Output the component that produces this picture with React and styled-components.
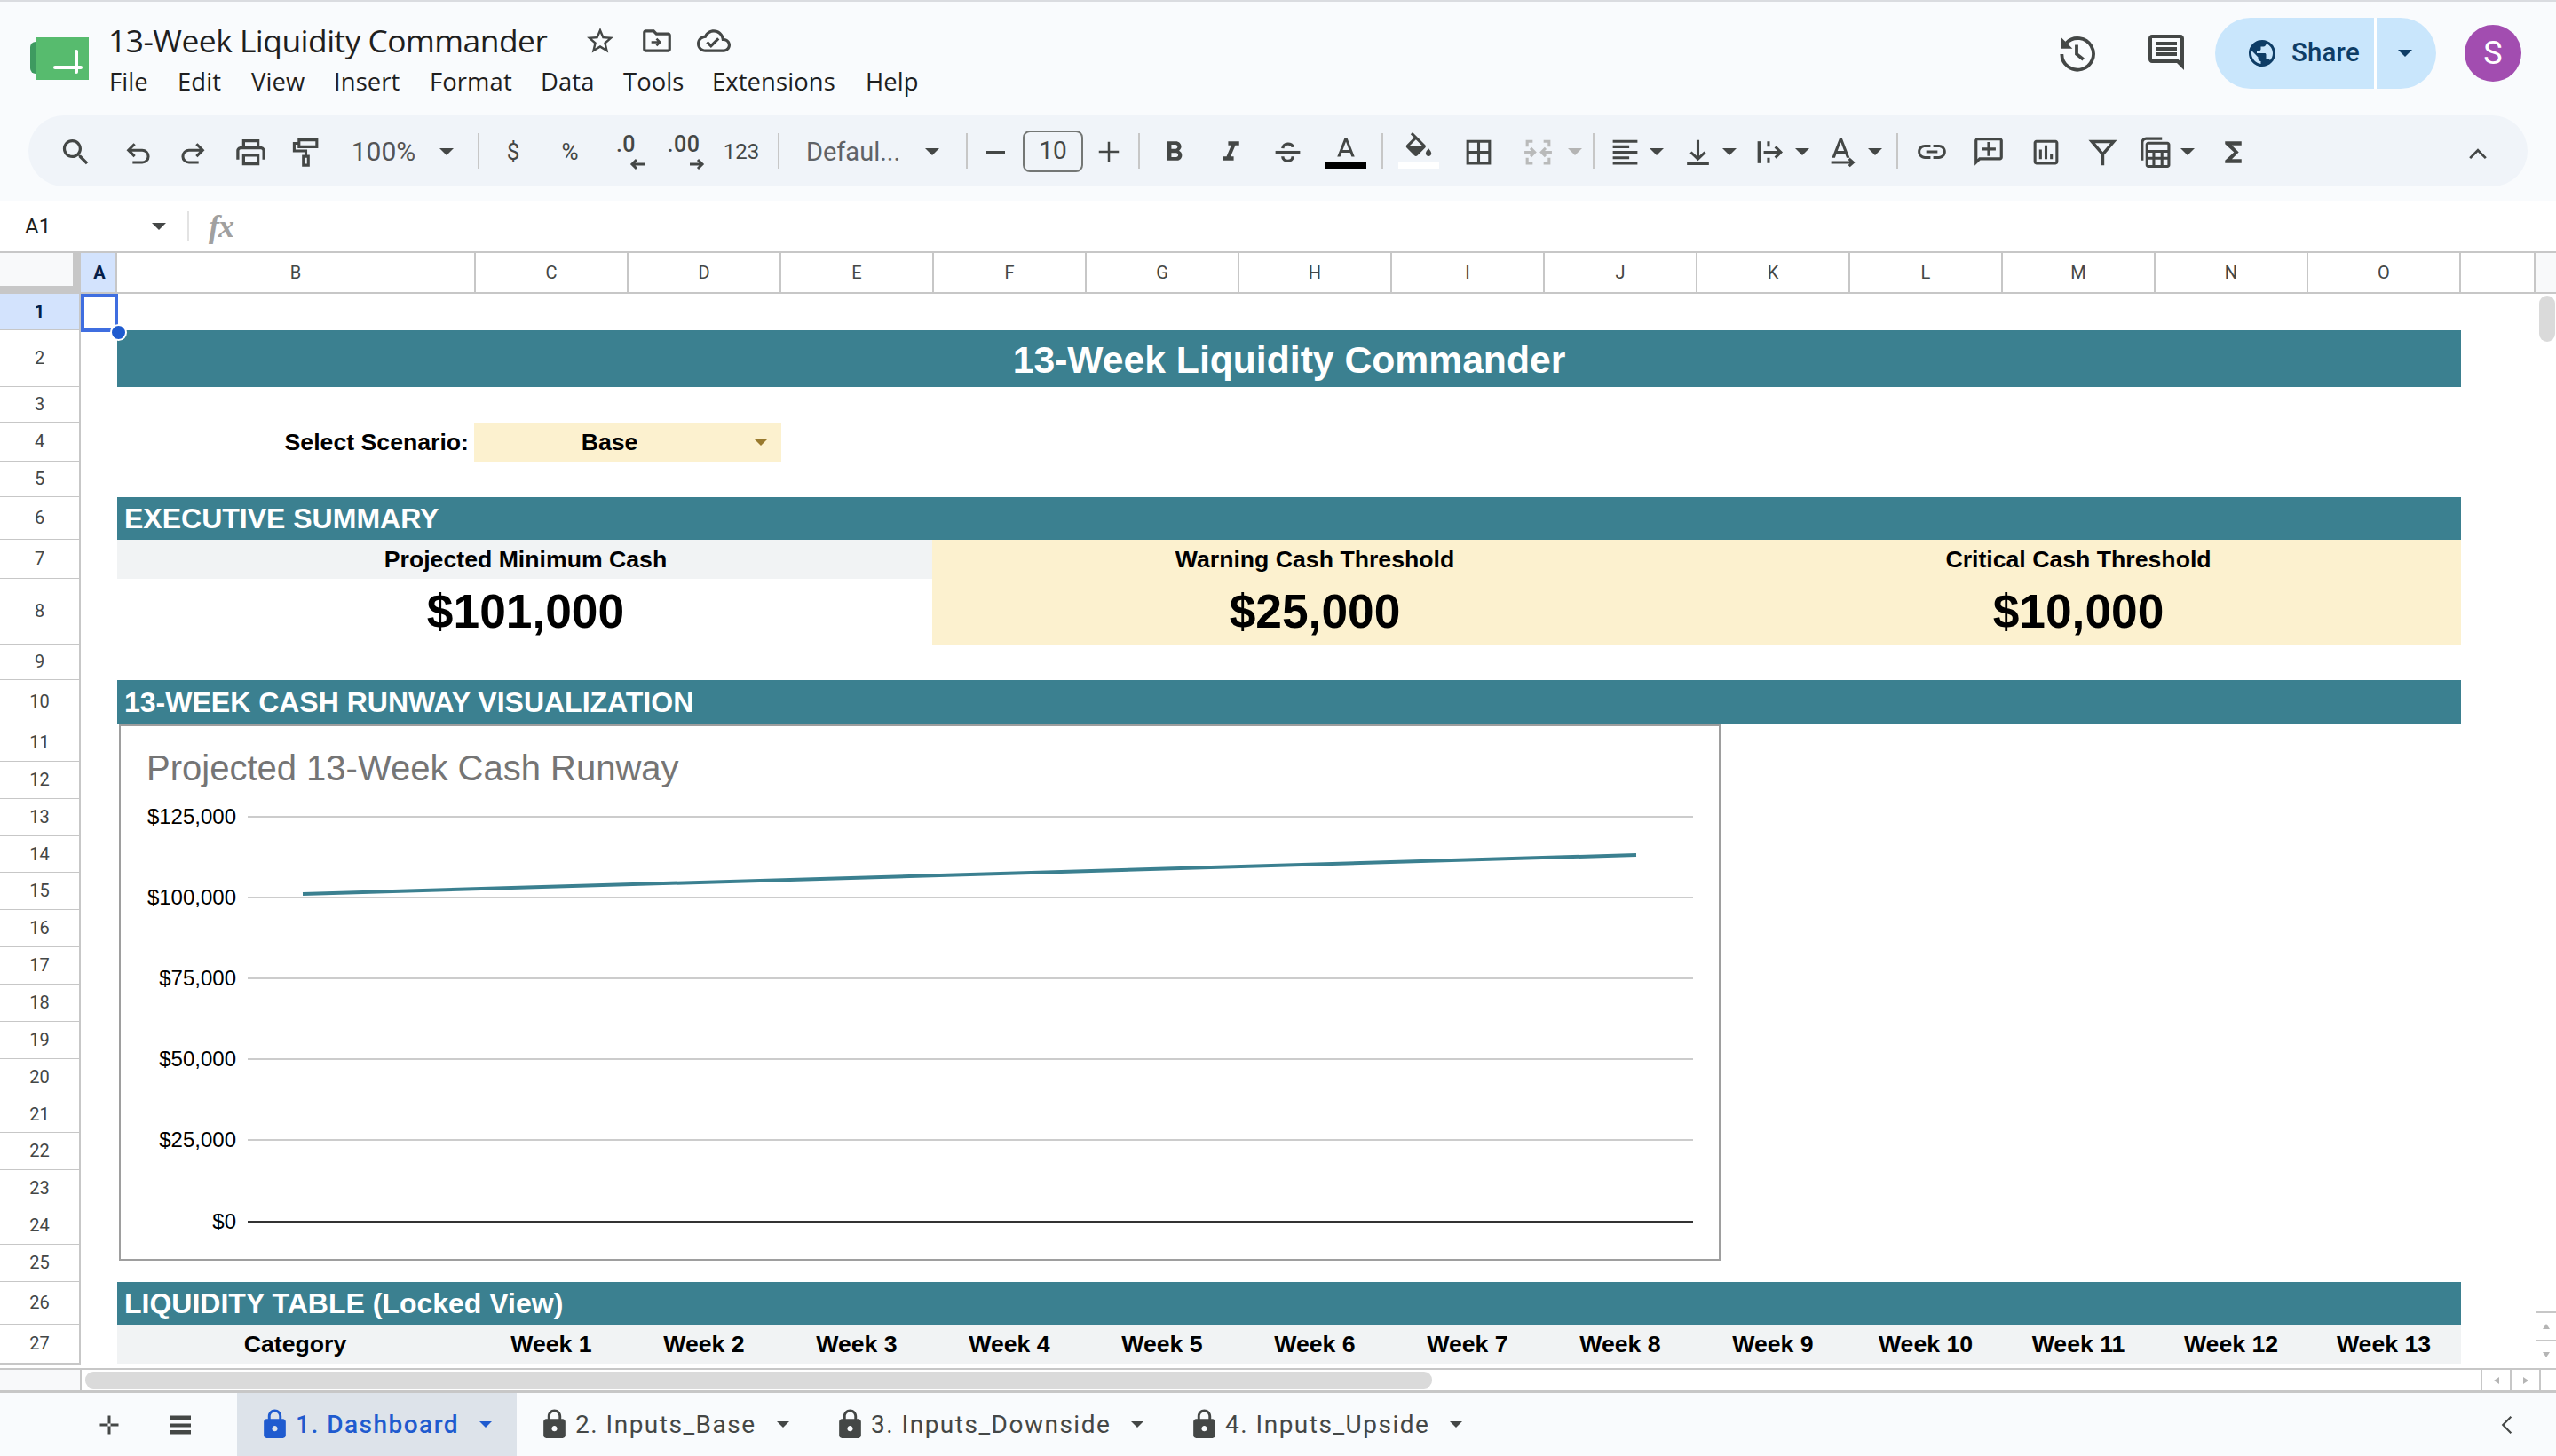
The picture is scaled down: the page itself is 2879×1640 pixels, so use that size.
import React from 'react';
import styled, { createGlobalStyle } from 'styled-components';

const UI = '"Open Sans", "Noto Sans", sans-serif';
const RB = 'Roboto, "Noto Sans", sans-serif';
const AR = '"Liberation Sans", Arial, sans-serif';
const TEAL = '#3b8090';
const YEL = '#fcf1cf';
const GREY = '#f1f3f4';
const LINE = '#c7c7c7';
const ICON = '#444746';

const Global = createGlobalStyle`
  html, body { margin: 0; padding: 0; width: 2879px; height: 1640px; overflow: hidden; background: #fff; }
  * { box-sizing: border-box; }
`;

const Page = styled.div`
  width: 2879px; height: 1640px; display: flex; flex-direction: column; background: #fff; overflow: hidden;
`;

/* ---- header ---- */
const Header = styled.header`
  height: 226px; flex: none; background: #f9fbfd; border-top: 2px solid #dadce0;
  display: flex; flex-direction: column;
`;
const TopBar = styled.div`
  height: 128px; flex: none; display: flex; align-items: flex-start; position: relative;
`;
const LogoBox = styled.div`
  flex: none; width: 122px; padding: 40px 0 0 34px;
`;
const TitleBlock = styled.div`
  flex: 1; display: flex; flex-direction: column; padding-top: 18px;
`;
const TitleRow = styled.div`
  display: flex; align-items: center; height: 50px;
`;
const DocTitle = styled.div`
  font: 400 35.4px/50px ${UI}; color: #1f1f1f; width: 522px; white-space: nowrap; letter-spacing: -0.52px;
`;
const TitleIcon = styled.span`
  flex: none; width: 64px; display: flex; justify-content: center; color: ${ICON}; padding-top: 2px;
`;
const Menu = styled.nav`
  display: flex; height: 40px; align-items: center; margin-top: 2px; padding-left: 1px;
`;
const MenuItem = styled.span`
  flex: none; width: ${p => p.$w}px; font: 400 27.4px/40px ${UI}; color: #1f1f1f; letter-spacing: 0.1px;
`;
const Actions = styled.div`
  flex: none; display: flex; align-items: center; height: 80px; margin-top: 18px; padding-right: 39px;
`;
const ActionIcon = styled.span`
  flex: none; width: 99px; display: flex; justify-content: center; color: ${ICON};
  padding: 0 ${p => p.$pr}px 3px 0;
`;
const ShareBtn = styled.div`
  flex: none; width: 249px; height: 80px; margin-left: 5px; border-radius: 40px; background: #c9e6fc; display: flex; overflow: hidden; color: #0e3d66;
`;
const ShareMain = styled.div`
  width: 182px; display: flex; align-items: center; padding-left: 35px; gap: 15px; border-right: 3px solid #fff;
  font: 500 29.4px/1 ${RB}; letter-spacing: 0.2px;
`;
const ShareCaret = styled.div`
  flex: 1; display: flex; align-items: center; justify-content: center; padding-right: 3px;
`;
const Avatar = styled.div`
  flex: none; width: 64px; height: 64px; margin-left: 32px; border-radius: 50%; background: #a24db0; color: #fff;
  display: flex; align-items: center; justify-content: center; font: 400 36px/1 ${RB};
`;

/* ---- toolbar ---- */
const Toolbar = styled.div`
  height: 80px; margin: 0 32px; padding-top: 2px; border-radius: 40px; background: #f0f4f9; display: flex; align-items: center;
`;
const Slot = styled.div`
  flex: none; width: ${p => p.$w}px; margin-left: ${p => p.$ml}px; height: 60px;
  display: flex; flex-direction: column; align-items: center; justify-content: center; color: ${ICON}; position: relative;
`;
const Sep = styled.div`
  width: 2px; height: 40px; background: #c7c7c7; margin-top: -2px;
`;
const Caret = styled.span`
  display: block; width: 0; height: 0; flex: none;
  border-left: ${p => p.$s || 8}px solid transparent; border-right: ${p => p.$s || 8}px solid transparent;
  border-top: ${p => p.$s || 8}px solid ${p => p.$c || 'currentColor'};
`;
const ToolText = styled.span`
  font: ${p => p.$wt || 400} ${p => p.$s || 26}px/1 ${p => p.$f || RB}; color: ${p => p.$c || ICON}; white-space: nowrap;
`;
const DecimalText = styled.span`
  font: 500 25px/24px ${RB}; color: ${ICON}; letter-spacing: 0.5px; margin-bottom: 3px; white-space: nowrap;
`;
const SizeBox = styled.div`
  width: 68px; height: 47px; border: 2px solid #747775; border-radius: 8px; display: flex; align-items: center; justify-content: center;
  font: 400 28px/1 ${RB}; color: ${ICON}; margin-top: -2px;
`;
const ColorBar = styled.span`
  position: absolute; left: 0; right: 0; bottom: 11px; height: 8px; background: ${p => p.$c};
`;
const ColorIcon = styled.span`
  margin-bottom: ${p => p.$m}px;
`;
const DecArrowWrap = styled.span`
  align-self: flex-end;
`;
const MergeWrap = styled.span`
  color: #b4b4b4;
`;

/* ---- formula bar ---- */
const FormulaBar = styled.div`
  height: 57px; flex: none; display: flex; align-items: center; background: #fff;
`;
const CellRef = styled.div`
  width: 213px; display: flex; align-items: center; justify-content: space-between; padding: 0 24px 0 28px;
  font: 400 24px/1 ${RB}; color: #1f1f1f; border-right: 2px solid #e3e3e3; height: 34px;
`;
const Fx = styled.div`
  margin-left: 22px; font: italic 700 36px/1 "Liberation Serif", serif; color: #a0a0a0; letter-spacing: -1px;
`;

/* ---- sheet ---- */
const SheetWrap = styled.div`
  height: 1258px; flex: none; display: flex; overflow: hidden;
`;
const Grid = styled.div`
  width: 2856px; height: 1258px; flex: none; display: grid; overflow: hidden;
  grid-template-columns: 91px 41px 404px repeat(13, 172px) 1fr;
  grid-template-rows: 48px 41px 64px 40px 44px 40px 48px 44px 74px 40px 50px repeat(15, 41.87px) 48px 44px 1fr;
`;
const Corner = styled.div`
  grid-row: 1; grid-column: 1; background: #f8f9fa; border-top: 2px solid ${LINE};
  border-right: 9px solid ${LINE}; border-bottom: 9px solid ${LINE};
`;
const ColHead = styled.div`
  grid-row: 1; grid-column: ${p => p.$c}; display: flex; align-items: center; justify-content: center;
  border-top: 2px solid ${LINE}; border-bottom: 2px solid ${LINE}; border-right: 2px solid ${LINE};
  font: ${p => (p.$on ? 700 : 400)} 20px/1 ${RB}; color: ${p => (p.$on ? '#041e49' : ICON)};
  background: ${p => (p.$on ? '#d3e3fd' : '#fff')}; padding-left: ${p => (p.$on ? 3 : 0)}px;
`;
const RowHead = styled.div`
  grid-row: ${p => p.$r}; grid-column: 1; display: flex; align-items: center; justify-content: center;
  box-shadow: inset 0 -1px 0 ${LINE}, 0 1px 0 ${LINE};
  border-right: 2px solid ${LINE}; padding-bottom: 2px;
  font: ${p => (p.$on ? 700 : 400)} 20px/1 ${RB}; color: ${p => (p.$on ? '#041e49' : ICON)};
  background: ${p => (p.$on ? '#d3e3fd' : '#fff')}; position: relative; z-index: 1;
`;
const Selected = styled.div`
  grid-row: 2; grid-column: 2; border: 4px solid #3f6ee0; margin: 0 0 -2px 0; width: 42px; position: relative; z-index: 3;
`;
const Handle = styled.span`
  position: absolute; right: -14px; bottom: -14px; width: 19px; height: 19px; border-radius: 50%;
  background: #1f5bcf; border: 2px solid #fff;
`;
const Cell = styled.div`
  grid-row: ${p => p.$r}; grid-column: ${p => p.$c}; display: flex; align-items: center; min-width: 0;
  justify-content: ${p => p.$j || 'center'}; background: ${p => p.$bg || 'transparent'};
  font: 700 ${p => p.$s || 26.67}px/1 ${AR}; color: ${p => p.$fg || '#000'}; white-space: nowrap;
  padding: ${p => p.$pad || '0'}; margin-left: ${p => p.$ml || 0}px; position: relative;
`;
const CellCaret = styled.span`
  position: absolute; right: 15px; top: 18px;
`;
const ChartFrame = styled.div`
  grid-row: 12 / 27; grid-column: 3 / 13; justify-self: start; align-self: start; margin-left: 2px;
  width: 1804px; height: 604px; border: 2px solid #9e9e9e; background: #fff; position: relative; z-index: 2;
`;
const ChartSvg = styled.svg`
  display: block; width: 100%; height: 100%;
`;
const VScroll = styled.div`
  flex: 1; display: flex; flex-direction: column; background: #fff;
`;
const VHead = styled.div`
  height: 48px; flex: none; background: #f8f9fa; border-top: 2px solid ${LINE}; border-bottom: 2px solid ${LINE};
`;
const VTrack = styled.div`
  flex: 1; padding: 2px 1px 0 4px; min-height: 0;
`;
const VThumb = styled.div`
  height: 52px; border-radius: 9px; background: #dadada;
`;
const VArrow = styled.div`
  height: 32px; flex: none; border-top: 2px solid ${LINE}; display: flex; align-items: center; justify-content: center;
`;
const MiniUp = styled.span`
  width: 0; height: 0; border-left: 4px solid transparent; border-right: 4px solid transparent; border-bottom: 6px solid #b5b5b5;
`;
const MiniDown = styled(MiniUp)`
  border-bottom: 0; border-top: 6px solid #b5b5b5;
`;
const MiniLeft = styled.span`
  width: 0; height: 0; border-top: 4px solid transparent; border-bottom: 4px solid transparent; border-right: 6px solid #b5b5b5;
`;
const MiniRight = styled(MiniLeft)`
  border-right: 0; border-left: 6px solid #b5b5b5;
`;

/* ---- horizontal scroll ---- */
const HScroll = styled.div`
  height: 25px; flex: none; display: flex; align-items: stretch; background: #fff; border-top: 2px solid ${LINE};
`;
const HCorner = styled.div`
  width: 92px; flex: none; background: #f8f9fa; border-right: 2px solid ${LINE};
`;
const HTrack = styled.div`
  width: 2702px; flex: none; padding: 2px 0 2px 4px;
`;
const HThumb = styled.div`
  width: 1517px; height: 100%; border-radius: 9px; background: #dadada;
`;
const HArrow = styled.div`
  flex: none; width: ${p => p.$w || 33}px; border-left: 2px solid ${LINE}; display: flex; align-items: center; justify-content: center;
`;

/* ---- tabs ---- */
const TabBar = styled.div`
  flex: 1; display: flex; align-items: stretch; background: #f9fbfd; border-top: 3px solid ${LINE}; padding-left: 83px;
`;
const TabTool = styled.div`
  flex: none; width: 80px; display: flex; align-items: center; justify-content: center; color: ${ICON};
`;
const TabList = styled.div`
  flex: none; display: flex; margin-left: 24px;
`;
const Tab = styled.div`
  flex: none; width: ${p => p.$w}px; display: flex; align-items: center; padding-left: 24px; gap: 5px;
  background: ${p => (p.$on ? '#dde3ea' : 'transparent')}; color: ${p => (p.$on ? '#1f5bcf' : ICON)};
  font: ${p => (p.$on ? 500 : 400)} 28px/1 ${RB}; letter-spacing: 1.5px; white-space: nowrap;
`;
const TabCaret = styled.span`
  margin-left: 18px; display: block;
`;
const TabSpacer = styled.div`
  flex: 1;
`;
const Collapse = styled.div`
  flex: none; width: 110px; display: flex; align-items: center; justify-content: center; color: ${ICON};
`;

const Ic = ({ s = 37, vb = '0 0 24 24', d, children, fill = 'currentColor' }) => (
  <svg width={s} height={s} viewBox={vb} fill={fill} style={{ display: 'block', flex: 'none' }}>
    {d ? <path d={d} fillRule="evenodd" /> : null}
    {children}
  </svg>
);
const St = ({ d, w = 2 }) => <path d={d} fill="none" stroke="currentColor" strokeWidth={w} />;

const P = {
  search: 'M15.5 14h-.79l-.28-.27C15.41 12.59 16 11.11 16 9.5 16 5.91 13.09 3 9.5 3S3 5.91 3 9.5 5.91 16 9.5 16c1.61 0 3.09-.59 4.23-1.57l.27.28v.79l5 4.99L20.49 19l-4.99-5zm-6 0C7.01 14 5 11.99 5 9.5S7.01 5 9.5 5 14 7.01 14 9.5 11.99 14 9.5 14z',
  print: 'M19 8h-1V3H6v5H5c-1.66 0-3 1.34-3 3v6h4v4h12v-4h4v-6c0-1.66-1.34-3-3-3zM8 5h8v3H8V5zm8 14H8v-4h8v4zm2-2v-4H6v4H4v-6c0-.55.45-1 1-1h14c.55 0 1 .45 1 1v6h-2z',
  bold: 'M15.6 10.79c.97-.67 1.65-1.77 1.65-2.79 0-2.26-1.75-4-4-4H7v14h7.04c2.09 0 3.71-1.7 3.71-3.79 0-1.52-.86-2.82-2.15-3.42zM10 6.5h3c.83 0 1.5.67 1.5 1.5s-.67 1.5-1.5 1.5h-3v-3zm3.5 9H10v-3h3.5c.83 0 1.5.67 1.5 1.5s-.67 1.5-1.5 1.5z',
  italic: 'M10 4v3h2.21l-3.42 8H6v3h8v-3h-2.21l3.42-8H18V4z',
  letterA: 'M11 3L5.5 17h2.25l1.12-3h6.25l1.12 3h2.25L13 3h-2zm-1.38 9L12 5.67 14.38 12H9.62z',
  fill: 'M16.56 8.94L7.62 0 6.21 1.41l2.38 2.38-5.15 5.15c-.59.59-.59 1.54 0 2.12l5.5 5.5c.29.29.68.44 1.06.44s.77-.15 1.06-.44l5.5-5.5c.59-.58.59-1.53 0-2.12zM5.21 10L10 5.21 14.79 10H5.21zM19 11.5s-2 2.17-2 3.5c0 1.1.9 2 2 2s2-.9 2-2c0-1.33-2-3.5-2-3.5z',
  borders: 'M3 3v18h18V3H3zm8 16H5v-6h6v6zm0-8H5V5h6v6zm8 8h-6v-6h6v6zm0-8h-6V5h6v6z',
  alignL: 'M15 15H3v2h12v-2zm0-8H3v2h12V7zM3 13h18v-2H3v2zm0 8h18v-2H3v2zM3 3v2h18V3H3z',
  link: 'M3.9 12c0-1.71 1.39-3.1 3.1-3.1h4V7H7c-2.76 0-5 2.24-5 5s2.24 5 5 5h4v-1.9H7c-1.71 0-3.1-1.39-3.1-3.1zM8 13h8v-2H8v2zm9-6h-4v1.9h4c1.71 0 3.1 1.39 3.1 3.1s-1.39 3.1-3.1 3.1h-4V17h4c2.76 0 5-2.24 5-5s-2.24-5-5-5z',
  commentAdd: 'M20 2H4c-1.1 0-2 .9-2 2v18l4-4h14c1.1 0 2-.9 2-2V4c0-1.1-.9-2-2-2zm0 14H5.17L4 17.17V4h16v12zM11 5h2v4h4v2h-4v4h-2v-4H7V9h4z',
  chart: 'M19 3H5c-1.1 0-2 .9-2 2v14c0 1.1.9 2 2 2h14c1.1 0 2-.9 2-2V5c0-1.1-.9-2-2-2zm0 16H5V5h14v14zM7 10h2v7H7zm4-3h2v10h-2zm4 6h2v4h-2z',
  sigma: 'M18 4H6v2l6.5 6L6 18v2h12v-3h-7l5-5-5-5h7z',
  comments: 'M21.99 4c0-1.1-.89-2-1.99-2H4c-1.1 0-2 .9-2 2v12c0 1.1.9 2 2 2h14l4 4-.01-18zM20 4v13.17L18.83 16H4V4h16zM6 12h12v2H6zm0-3h12v2H6zm0-3h12v2H6z',
  globe: 'M12 2C6.48 2 2 6.48 2 12s4.48 10 10 10 10-4.48 10-10S17.52 2 12 2zM4 12c0-.61.08-1.21.21-1.78L8.99 15v1c0 1.1.9 2 2 2v1.93C7.06 19.43 4 16.07 4 12zm13.89 5.4c-.26-.81-1-1.4-1.9-1.4h-1v-3c0-.55-.45-1-1-1h-6v-2h2c.55 0 1-.45 1-1V7h2c1.1 0 2-.9 2-2v-.41C17.92 5.77 20 8.65 20 12c0 2.08-.81 3.98-2.11 5.4z',
  star: 'M22 9.24l-7.19-.62L12 2 9.19 8.63 2 9.24l5.46 4.73L5.82 21 12 17.27 18.18 21l-1.63-7.03L22 9.24zM12 15.4l-3.76 2.27 1-4.28-3.32-2.88 4.38-.38L12 6.1l1.71 4.04 4.38.38-3.32 2.88 1 4.28L12 15.4z',
  folder: 'M20 6h-8l-2-2H4c-1.1 0-2 .9-2 2v12c0 1.1.9 2 2 2h16c1.1 0 2-.9 2-2V8c0-1.1-.9-2-2-2zm0 12H4V6h5.17l2 2H20v10zM12.2 10l-1.1 1.1 1.1 1.1H8v1.6h4.2l-1.1 1.1 1.1 1.1 3-3z',
  cloud: 'M19.35 10.04C18.67 6.59 15.64 4 12 4 9.11 4 6.6 5.64 5.35 8.04 2.34 8.36 0 10.91 0 14c0 3.31 2.69 6 6 6h13c2.76 0 5-2.24 5-5 0-2.64-2.05-4.78-4.65-4.96zM19 18H6c-2.21 0-4-1.79-4-4 0-2.05 1.53-3.76 3.56-3.97l1.07-.11.5-.95C8.08 7.14 9.94 6 12 6c2.62 0 4.88 1.86 5.39 4.43l.3 1.5 1.53.11c1.56.1 2.78 1.41 2.78 2.96 0 1.65-1.35 3-3 3zm-9-3.82l-2.09-2.09L6.5 13.5 10 17l6.01-6.01-1.41-1.41z',
  lock: 'M18 8h-1V6c0-2.76-2.24-5-5-5S7 3.24 7 6v2H6c-1.1 0-2 .9-2 2v10c0 1.1.9 2 2 2h12c1.1 0 2-.9 2-2V10c0-1.1-.9-2-2-2zm-6 9c-1.1 0-2-.9-2-2s.9-2 2-2 2 .9 2 2-.9 2-2 2zm3.1-9H8.9V6c0-1.71 1.39-3.1 3.1-3.1 1.71 0 3.1 1.39 3.1 3.1v2z',
};

const Undo = () => <Ic><St d="M9.5 6 5 10.5l4.5 4.5M5 10.5h10a4.5 4.5 0 0 1 0 9H8" /></Ic>;
const Redo = () => <Ic><St d="M14.5 6 19 10.5 14.5 15M19 10.5H9a4.5 4.5 0 0 0 0 9h7" /></Ic>;
const Paint = () => <Ic><St d="M7 3h13v5H7zM7 5.5H3.5V11H12v4" /><St d="M10.2 15h3.6v6.5h-3.6z" /></Ic>;
const Strike = () => <Ic><St d="M3 12h18" /><St d="M8.3 9.2c.2-4.2 7.2-4.2 7.4-.9M8.3 15c0 4.5 7.4 4.5 7.4 0" w={2.2} /></Ic>;
const Merge = () => (
  <Ic><g opacity=".9"><St d="M8 4H4v4M4 16v4h4M16 4h4v4M20 16v4h-4" /><St d="M2 12h7M6.5 9l3 3-3 3M22 12h-7M17.5 9l-3 3 3 3" /></g></Ic>
);
const VAlign = () => <Ic><St d="M12 3v14M6.8 12 12 17l5.2-5" /><path d="M4 19h16v2.4H4z" /></Ic>;
const Wrap = () => <Ic><path d="M3 4h2.4v16H3z" /><St d="M11 4v4M11 16v4M7.5 12H20M16 8l4 4-4 4" /></Ic>;
const RotateA = () => <Ic><path d={P.letterA} transform="translate(-2 -1)" /><St d="M3 19.5h15M16 16.8l3 2.7-3 2.7" /></Ic>;
const Funnel = () => <Ic><St d="M4 4.2h16L12 13.5zM12 13v8.5" w={2.2} /></Ic>;
const FuncTable = () => (
  <Ic>
    <St d="M2.5 18V5a3 3 0 0 1 3-3H17" />
    <path d="M7 5h14c1 0 2 1 2 2v15c0 1-1 2-2 2H7c-1 0-2-1-2-2V7c0-1 1-2 2-2zm0 2v4h14V7zm0 6v3h3v-3zm5 0v3h4v-3zm6 0v3h3v-3zM7 18v4h3v-4zm5 0v4h4v-4zm6 0v4h3v-4z" fillRule="evenodd" transform="translate(0 -.6)" />
  </Ic>
);
const DecArrow = ({ right }) => (
  <svg width="18" height="14" viewBox="0 0 18 14" style={{ display: 'block' }}>
    <path d={right ? 'M1 7h14M10 2l5 5-5 5' : 'M17 7H3M8 2 3 7l5 5'} fill="none" stroke={ICON} strokeWidth="3" />
  </svg>
);

const tools = [
  { c: 85, n: <Ic d={P.search} s={39} /> },
  { c: 155, n: <Undo /> },
  { c: 217, n: <Redo /> },
  { c: 282, n: <Ic d={P.print} s={39} /> },
  { c: 344, n: <Paint /> },
  { c: 432, w: 80, n: <ToolText $s={30} $c="#555">100%</ToolText> },
  { c: 503, w: 20, n: <Caret /> },
  { c: 539, w: 4, n: <Sep /> },
  { c: 578, n: <ToolText $s={26}>$</ToolText> },
  { c: 642, n: <ToolText $s={26}>%</ToolText> },
  { c: 705, w: 44, n: <><DecimalText>.0</DecimalText><DecArrowWrap><DecArrow /></DecArrowWrap></> },
  { c: 770, w: 48, n: <><DecimalText>.00</DecimalText><DecArrowWrap><DecArrow right /></DecArrowWrap></> },
  { c: 835, n: <ToolText $s={24}>123</ToolText> },
  { c: 877, w: 4, n: <Sep /> },
  { c: 961, w: 110, n: <ToolText $s={29} $c="#5f6368">Defaul...</ToolText> },
  { c: 1050, w: 20, n: <Caret /> },
  { c: 1089, w: 4, n: <Sep /> },
  { c: 1121, n: <svg width="21" height="3"><rect width="21" height="3" fill={ICON} /></svg> },
  { c: 1186, w: 68, n: <SizeBox>10</SizeBox> },
  { c: 1249, n: <Ic s={30}><path d="M11 3h2v18h-2zM3 11h18v2H3z" /></Ic> },
  { c: 1283, w: 4, n: <Sep /> },
  { c: 1322, n: <Ic d={P.bold} /> },
  { c: 1386, n: <Ic d={P.italic} /> },
  { c: 1450, n: <Strike /> },
  { c: 1516, w: 46, n: <><ColorIcon $m={4}><Ic d={P.letterA} s={36} /></ColorIcon><ColorBar $c="#000" /></> },
  { c: 1557, w: 4, n: <Sep /> },
  { c: 1598, w: 46, n: <><ColorIcon $m={6}><Ic d={P.fill} s={38} /></ColorIcon><ColorBar $c="#fff" /></> },
  { c: 1665, n: <Ic d={P.borders} /> },
  { c: 1732, n: <MergeWrap><Merge /></MergeWrap> },
  { c: 1774, w: 20, n: <Caret $c="#b4b4b4" /> },
  { c: 1795, w: 4, n: <Sep /> },
  { c: 1830, n: <Ic d={P.alignL} /> },
  { c: 1866, w: 20, n: <Caret /> },
  { c: 1912, n: <VAlign /> },
  { c: 1948, w: 20, n: <Caret /> },
  { c: 1993, n: <Wrap /> },
  { c: 2030, w: 20, n: <Caret /> },
  { c: 2076, n: <RotateA /> },
  { c: 2112, w: 20, n: <Caret /> },
  { c: 2137, w: 4, n: <Sep /> },
  { c: 2176, n: <Ic d={P.link} s={38} /> },
  { c: 2240, n: <Ic d={P.commentAdd} s={38} /> },
  { c: 2304, n: <Ic d={P.chart} /> },
  { c: 2368, n: <Funnel /> },
  { c: 2427, n: <FuncTable /> },
  { c: 2464, w: 20, n: <Caret /> },
  { c: 2515, n: <Ic d={P.sigma} /> },
  { c: 2791, n: <Ic s={42} d="M6.4 15.6 12 9.9l5.6 5.7-1.1 1L12 12.1l-4.5 4.5z" /> },
];

const menu = [['File', 77], ['Edit', 83], ['View', 93], ['Insert', 108], ['Format', 125], ['Data', 93], ['Tools', 100], ['Extensions', 173], ['Help', 60]];
const columns = ['A', 'B', 'C', 'D', 'E', 'F', 'G', 'H', 'I', 'J', 'K', 'L', 'M', 'N', 'O'];
const yTicks = [['$125,000', 104], ['$100,000', 195], ['$75,000', 286], ['$50,000', 377], ['$25,000', 468]];
const tabs = ['1. Dashboard', '2. Inputs_Base', '3. Inputs_Downside', '4. Inputs_Upside'];
const tabWidths = [315, 333, 399, 400];

function renderTools() {
  let x = 32;
  return tools.map((t, i) => {
    const w = t.w || 40;
    const ml = t.c - w / 2 - x;
    x = t.c + w / 2;
    return <Slot key={i} $w={w} $ml={ml}>{t.n}</Slot>;
  });
}

export default function App() {
  return (
    <Page>
      <Global />
      <Header>
        <TopBar>
          <LogoBox>
            <svg width="66" height="48" viewBox="0 0 66 48" style={{ display: 'block' }}>
              <rect x="0" y="5" width="14" height="36" rx="6" fill="#3e9a60" />
              <rect x="6" y="0" width="60" height="48" fill="#57bb6e" />
              <rect x="26" y="32" width="33" height="4" rx="2" fill="#fff" />
              <rect x="50" y="14" width="4" height="27" rx="2" fill="#fff" />
            </svg>
          </LogoBox>
          <TitleBlock>
            <TitleRow>
              <DocTitle>13-Week Liquidity Commander</DocTitle>
              <TitleIcon><Ic d={P.star} s={36} /></TitleIcon>
              <TitleIcon><Ic d={P.folder} s={38} /></TitleIcon>
              <TitleIcon><Ic d={P.cloud} s={38} /></TitleIcon>
            </TitleRow>
            <Menu>
              {menu.map(([m, w]) => <MenuItem key={m} $w={w}>{m}</MenuItem>)}
            </Menu>
          </TitleBlock>
          <Actions>
            <ActionIcon $pr={5}>
              <Ic s={46}>
                <St d="M6 6.4A9.3 9.3 0 1 1 3.3 13" w={2} />
                <path d="M3 3.2v6.6h6.6z" />
                <St d="M12 7.5V13l4 3.2" w={2} />
              </Ic>
            </ActionIcon>
            <ActionIcon $pr={2}><Ic d={P.comments} s={48} /></ActionIcon>
            <ShareBtn>
              <ShareMain><Ic d={P.globe} s={36} /><span>Share</span></ShareMain>
              <ShareCaret><Caret /></ShareCaret>
            </ShareBtn>
            <Avatar>S</Avatar>
          </Actions>
        </TopBar>
        <Toolbar>{renderTools()}</Toolbar>
      </Header>

      <FormulaBar>
        <CellRef><span>A1</span><Caret $s={8} $c={ICON} /></CellRef>
        <Fx>fx</Fx>
      </FormulaBar>

      <SheetWrap>
        <Grid>
          <Corner />
          {columns.map((c, i) => <ColHead key={c} $c={i + 2} $on={c === 'A'}>{c}</ColHead>)}
          <ColHead $c={17} />
          {Array.from({ length: 27 }, (_, i) => (
            <RowHead key={i} $r={i + 2} $on={i === 0}>{i + 1}</RowHead>
          ))}
          <Selected><Handle /></Selected>

          <Cell $r={3} $c="3 / 17" $bg={TEAL} $fg="#fff" $s={42.67} $pad="2px 0 0">13-Week Liquidity Commander</Cell>

          <Cell $r={5} $c="3" $j="flex-end" $pad="0 8px 0 0">Select Scenario:</Cell>
          <Cell $r={5} $c="4 / 6" $ml={-2} $bg={YEL} $pad="0 41px 0 0">Base<CellCaret><Caret $s={8} $c="#997a2e" /></CellCaret></Cell>

          <Cell $r={7} $c="3 / 17" $bg={TEAL} $fg="#fff" $s={32} $j="flex-start" $pad="0 0 0 8px">EXECUTIVE SUMMARY</Cell>
          <Cell $r={8} $c="3 / 7" $bg={GREY}>Projected Minimum Cash</Cell>
          <Cell $r={8} $c="7 / 12" $ml={-2} $bg={YEL}>Warning Cash Threshold</Cell>
          <Cell $r={8} $c="12 / 17" $bg={YEL} $pad="0 2px 0 0">Critical Cash Threshold</Cell>
          <Cell $r={9} $c="3 / 7" $s={53.3}>$101,000</Cell>
          <Cell $r={9} $c="7 / 12" $ml={-2} $bg={YEL} $s={53.3}>$25,000</Cell>
          <Cell $r={9} $c="12 / 17" $bg={YEL} $s={53.3} $pad="0 2px 0 0">$10,000</Cell>

          <Cell $r={11} $c="3 / 17" $bg={TEAL} $fg="#fff" $s={32} $j="flex-start" $pad="0 0 0 8px">13-WEEK CASH RUNWAY VISUALIZATION</Cell>

          <ChartFrame>
            <ChartSvg viewBox="0 0 1800 600">
              <text x="29" y="61" fontFamily={AR} fontSize="40" fill="#757575">Projected 13-Week Cash Runway</text>
              {yTicks.map(([l, y]) => (
                <g key={l}>
                  <line x1="143" x2="1771" y1={y - 2} y2={y - 2} stroke="#cccccc" strokeWidth="2" />
                  <text x="130" y={y + 6} textAnchor="end" fontFamily={AR} fontSize="24" fill="#000">{l}</text>
                </g>
              ))}
              <line x1="143" x2="1771" y1="558" y2="558" stroke="#333" strokeWidth="2" />
              <text x="130" y="566" textAnchor="end" fontFamily={AR} fontSize="24" fill="#000">$0</text>
              <line x1="205" y1="189" x2="1707" y2="145" stroke={TEAL} strokeWidth="4" />
            </ChartSvg>
          </ChartFrame>

          <Cell $r={27} $c="3 / 17" $bg={TEAL} $fg="#fff" $s={32} $j="flex-start" $pad="0 0 0 8px">LIQUIDITY TABLE (Locked View)</Cell>
          <Cell $r={28} $c="3 / 17" $bg={GREY} />
          <Cell $r={28} $c="3" $pad="0 3px 0 0">Category</Cell>
          {Array.from({ length: 13 }, (_, i) => (
            <Cell key={i} $r={28} $c={i + 4} $pad="0 2px 0 0">Week {i + 1}</Cell>
          ))}
        </Grid>
        <VScroll>
          <VHead />
          <VTrack><VThumb /></VTrack>
          <VArrow><MiniUp /></VArrow>
          <VArrow><MiniDown /></VArrow>
        </VScroll>
      </SheetWrap>

      <HScroll>
        <HCorner />
        <HTrack><HThumb /></HTrack>
        <HArrow><MiniLeft /></HArrow>
        <HArrow><MiniRight /></HArrow>
        <HArrow $w={23} />
      </HScroll>

      <TabBar>
        <TabTool><Ic s={36} d="M11 5h2v14h-2zM5 11h14v2H5z" /></TabTool>
        <TabTool><Ic s={36} d="M4 5h16v3H4zM4 11h16v2.6H4zM4 16h16v3H4z" /></TabTool>
        <TabList>
          {tabs.map((t, i) => (
            <Tab key={t} $on={i === 0} $w={tabWidths[i]}>
              <Ic d={P.lock} s={37} />
              <span>{t}</span>
              <TabCaret><Caret $s={7} /></TabCaret>
            </Tab>
          ))}
        </TabList>
        <TabSpacer />
        <Collapse><Ic s={36} d="M15.4 6.4 9.8 12l5.6 5.6-1 1L7.8 12l6.6-6.6z" /></Collapse>
      </TabBar>
    </Page>
  );
}
